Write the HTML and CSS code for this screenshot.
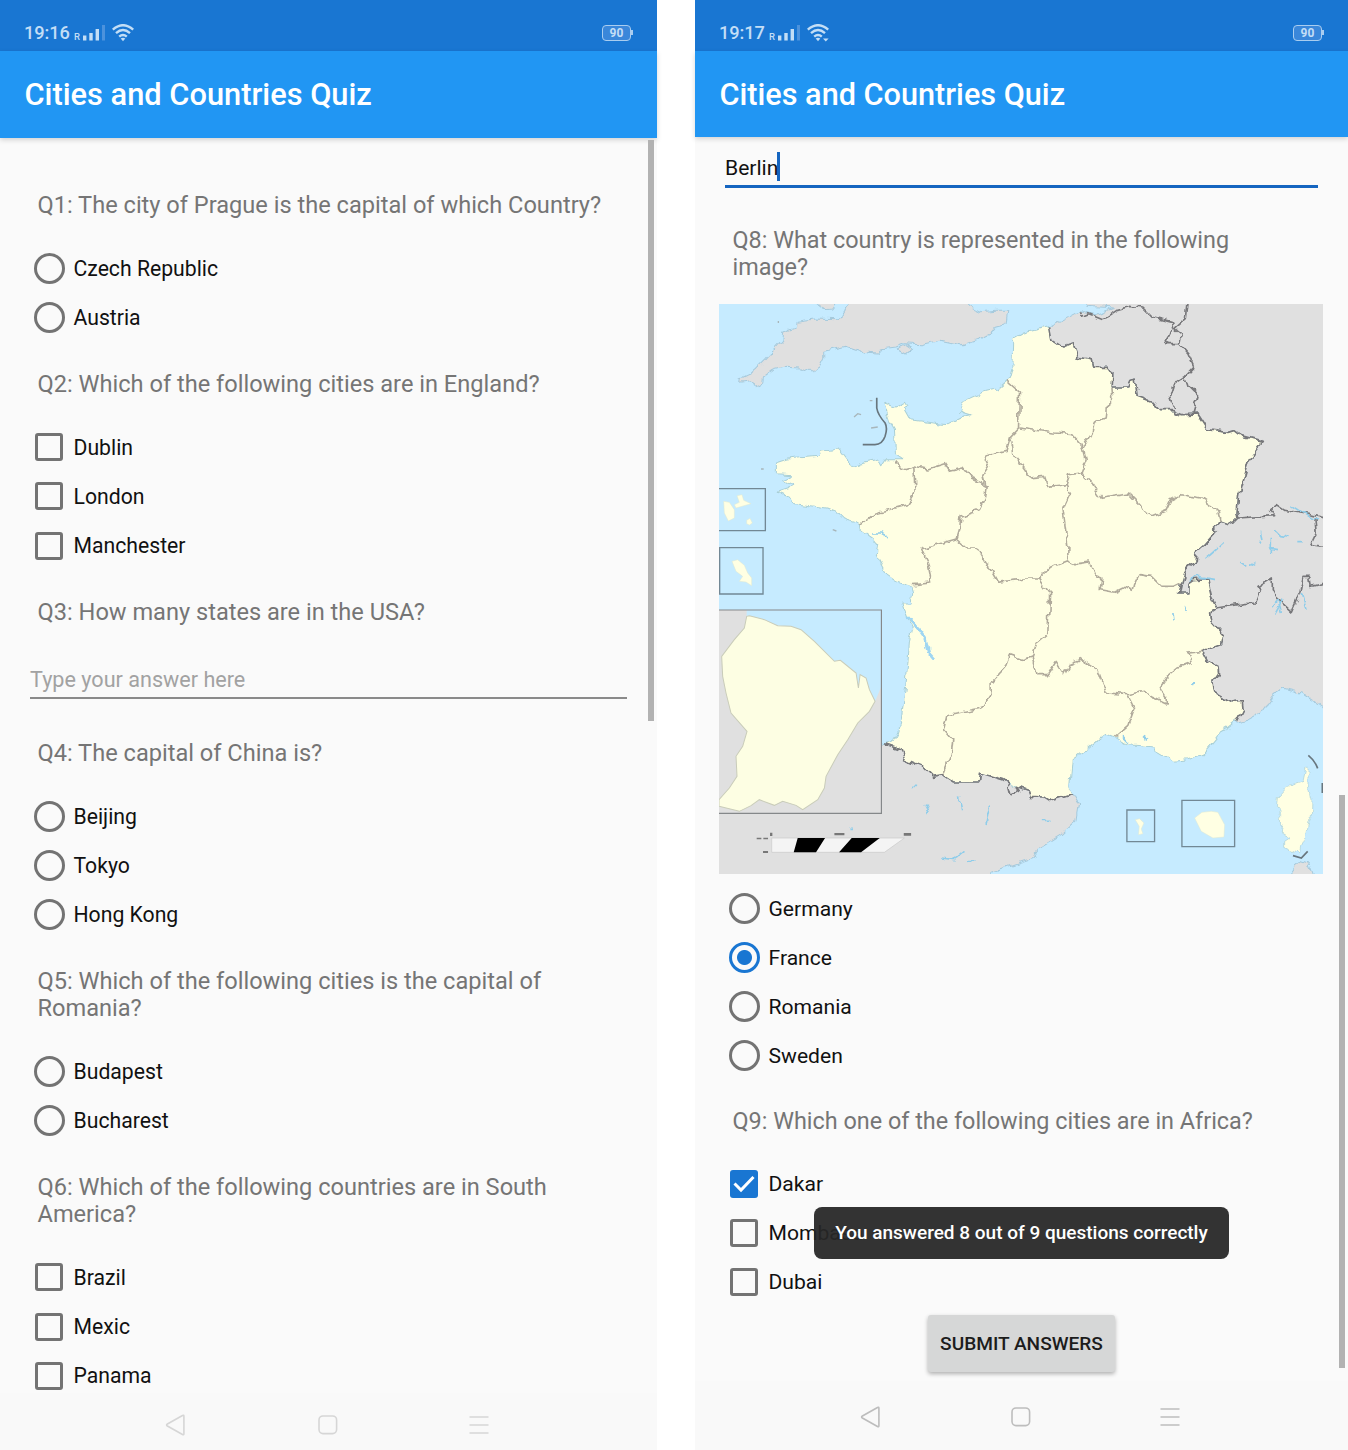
FILE: index.html
```html
<!DOCTYPE html>
<html lang="en">
<head>
<meta charset="utf-8">
<title>Cities and Countries Quiz</title>
<link rel="stylesheet" href="styles.css">
</head>
<body>
<svg class="defs" width="0" height="0" aria-hidden="true">
  <symbol id="signal" viewBox="0 0 24 16">
    <rect x="0" y="10.5" width="3.4" height="5" fill="#c3def6"/>
    <rect x="6.3" y="8" width="3.4" height="7.5" fill="#c3def6"/>
    <rect x="12.6" y="4" width="3.4" height="11.5" fill="#c3def6"/>
    <rect x="19" y="0" width="3" height="15.5" fill="#4c92dc"/>
  </symbol>
  <symbol id="wifi" viewBox="0 0 22 18">
    <g fill="none" stroke="#c3def6" stroke-width="2.4">
      <path d="M.8 5.6Q11-3.2 21.2 5.6"/>
      <path d="M4 9.2Q11 3 18 9.2"/>
      <path d="M7.2 12.6Q11 9.3 14.8 12.6"/>
    </g>
    <path d="M11 17.2L8.7 14.6Q11 13 13.3 14.6Z" fill="#c3def6"/>
  </symbol>
  <symbol id="back" viewBox="0 0 22 22">
    <path d="M18.9 2.2V19.8Q18.9 21.3 17.5 20.5L2.4 12Q.8 11 2.4 10L17.5 1.5Q18.9.7 18.9 2.2Z"/>
  </symbol>
  <symbol id="home" viewBox="0 0 22 22">
    <rect x="2" y="2" width="17.6" height="17.6" rx="4"/>
  </symbol>
  <symbol id="menu" viewBox="0 0 22 22">
    <path d="M1.5 3H20.5M1.5 11H20.5M1.5 19H20.5"/>
  </symbol>
</svg>
<main class="screens">
  <section class="phone phone-start">
    <header class="status">
      <span class="clock">19:16</span><span class="roaming">R</span>
      <svg class="signal"><use href="#signal"/></svg>
      <svg class="wifi"><use href="#wifi"/></svg>
      <span class="battery">90</span>
    </header>
    <h1 class="appbar">Cities and Countries Quiz</h1>
    <div class="content">
      <p class="question">Q1: The city of Prague is the capital of which Country?</p>
      <div class="option"><i class="radio"></i>Czech Republic</div>
      <div class="option"><i class="radio"></i>Austria</div>
      <p class="question">Q2: Which of the following cities are in England?</p>
      <div class="option"><i class="check"></i>Dublin</div>
      <div class="option"><i class="check"></i>London</div>
      <div class="option"><i class="check"></i>Manchester</div>
      <p class="question">Q3: How many states are in the USA?</p>
      <div class="field"><span>Type your answer here</span></div>
      <p class="question">Q4: The capital of China is?</p>
      <div class="option"><i class="radio"></i>Beijing</div>
      <div class="option"><i class="radio"></i>Tokyo</div>
      <div class="option"><i class="radio"></i>Hong Kong</div>
      <p class="question">Q5: Which of the following cities is the capital of<br>Romania?</p>
      <div class="option"><i class="radio"></i>Budapest</div>
      <div class="option"><i class="radio"></i>Bucharest</div>
      <p class="question">Q6: Which of the following countries are in South<br>America?</p>
      <div class="option"><i class="check"></i>Brazil</div>
      <div class="option"><i class="check"></i>Mexic</div>
      <div class="option"><i class="check"></i>Panama</div>
    </div>
    <div class="scrollbar"></div>
    <nav class="navbar">
      <svg><use href="#back"/></svg><svg><use href="#home"/></svg><svg><use href="#menu"/></svg>
    </nav>
  </section>

  <section class="phone phone-end">
    <header class="status">
      <span class="clock">19:17</span><span class="roaming">R</span>
      <svg class="signal"><use href="#signal"/></svg>
      <svg class="wifi"><use href="#wifi"/><path d="M16 14.4h5.6l-2.8 3.2z" fill="#c3def6"/></svg>
      <span class="battery">90</span>
    </header>
    <h1 class="appbar">Cities and Countries Quiz</h1>
    <div class="content">
      <div class="field field-active"><span>Berlin</span><i class="caret"></i></div>
      <p class="question">Q8: What country is represented in the following<br>image?</p>
      <svg class="map" viewBox="14 13 1811 1710" preserveAspectRatio="none">
        <defs>
          <filter id="coast" x="0" y="0" width="1840" height="1740" filterUnits="userSpaceOnUse" color-interpolation-filters="sRGB">
            <feTurbulence type="fractalNoise" baseFrequency="0.035" numOctaves="2" seed="4"/>
            <feDisplacementMap in="SourceGraphic" scale="24" xChannelSelector="R" yChannelSelector="G"/>
          </filter>
        </defs>
        <rect x="0" y="0" width="1840" height="1740" fill="#c6ebff"/>
        <g filter="url(#coast)" stroke-linejoin="round">
          <!-- neighbouring countries -->
          <g fill="#e0e0e0" stroke="#a5c9dc" stroke-width="3">
            <path d="M410 0L380 45 375 60 300 58 245 65 243 85 208 97 205 125 155 180 120 215 78 235 76 248 105 243 132 261 148 250 150 232 180 210 210 203 260 205 298 222 315 205 328 180 328 155 350 150 395 140 430 152 445 165 455 158 490 160 500 148 545 142 570 132 620 135 680 122 745 135 800 115 830 100 845 80 875 72 880 32 850 32 800 36 765 20 750 0Z"/>
            <path d="M300 8L330 30 355 28 370 8ZM548 148L575 135 595 148 575 163Z"/>
            <path d="M1005 80L1095 33 1140 45 1200 25 1120 20 1110 0H1850V1235L1825 1223 1760 1180 1705 1165 1675 1190 1640 1240 1600 1262 1568 1270 1400 1200 1300 700 1000 200Z"/>
            <path d="M490 1330L515 1335 800 1380 1080 1488 1092 1510 1083 1565 1040 1605 975 1645 955 1675 900 1693 830 1718 820 1760H0V1530H490Z"/>
            <path d="M1722 1730L1740 1700 1760 1683 1780 1690 1795 1730Z"/>
          </g>
          <path fill="#ffffe3" stroke="#a9cfd6" stroke-width="3" d="M1005 80L1012 120 1045 142 1075 130 1090 172 1130 180 1135 203 1180 203 1192 220 1190 262 1240 262 1250 240 1262 235 1268 290 1310 305 1335 333 1375 333 1400 345 1450 343 1480 390 1540 398 1560 392 1580 408 1643 425 1600 485 1585 540 1572 585 1567 640 1570 655 1550 675 1520 665 1497 685 1505 695 1470 735 1447 755 1445 780 1415 805 1400 855 1395 880 1420 880 1420 850 1435 840 1480 838 1485 868 1490 890 1508 925 1485 940 1490 965 1525 1005 1518 1035 1465 1055 1480 1085 1510 1100 1512 1120 1495 1145 1500 1180 1550 1210 1583 1205 1585 1225 1565 1265 1540 1285 1515 1300 1500 1320 1475 1350 1460 1365 1420 1380 1375 1385 1325 1355 1322 1342 1240 1335 1200 1310 1175 1300 1120 1345 1070 1380 1063 1460 1075 1485 1010 1505 990 1492 950 1490 945 1475 905 1460 880 1450 865 1440 798 1420 795 1447 720 1447 685 1425 655 1430 630 1405 570 1380 560 1350 515 1335 540 1325 560 1260 575 1150 585 1030 595 985 580 955 565 910 590 910 595 880 590 860 545 845 520 828 485 765 490 735 475 715 440 690 442 672 385 655 365 635 340 625 240 612 225 590 190 575 235 560 205 540 240 525 183 522 183 490 220 478 310 470 320 455 375 448 415 500 435 490 495 478 505 495 515 480 565 480 543 465 540 385 525 360 508 308 545 322 570 308 578 320 570 325 590 360 695 375 740 352 770 345 735 335 745 305 800 280 850 268 888 235 895 210 898 115 925 100Z"/>
          <path fill="#ffffe3" stroke="#a9cfd6" stroke-width="2" d="M1775 1400L1783 1400 1783 1450 1792 1500 1790 1550 1780 1570 1772 1610 1758 1640 1755 1660 1710 1640 1710 1625 1725 1615 1700 1600 1705 1570 1690 1555 1700 1540 1688 1525 1692 1490 1720 1460 1765 1445Z"/>
          <!-- regional borders -->
          <g fill="none" stroke="#b0aa9b" stroke-width="4.8">
            <path d="M543 485L565 508 598 498 640 508 690 492 705 515 745 505 770 535 800 548 815 555 810 600 795 630 740 650 735 685 725 718 620 748 640 790 652 850 595 855"/>
            <path d="M598 498L602 580 580 615 485 640 440 675"/>
            <path d="M725 718L755 745 790 745 825 805 850 848 925 838 975 838 1010 800 1060 780"/>
            <path d="M810 550L805 530 825 500 810 470 875 455 888 410 912 385 915 280 875 245M888 410L900 470 930 510 945 535 990 530 1000 560 1055 555 1065 525 1100 520 1115 480 1105 440 1075 405 1020 400 915 385"/>
            <path d="M1105 440L1130 400 1135 370 1175 355 1180 315 1195 300 1192 262M1100 520L1130 550 1160 593 1240 580 1275 615 1285 635 1315 648 1355 632 1370 600 1400 585 1460 595 1510 630 1520 665"/>
            <path d="M1055 555L1068 580 1045 630 1060 740 1060 780 1090 795 1125 790 1140 825 1165 835 1160 870 1200 878 1225 865 1255 875 1260 855 1275 825 1310 830 1340 860 1380 860 1400 850"/>
            <path d="M975 838L1005 880 1005 895 1000 1000 965 1030 950 1072 925 1080 885 1065 870 1105 830 1150 830 1180 800 1225 700 1245 690 1290 715 1320 710 1365 685 1425"/>
            <path d="M950 1072L965 1125 1000 1125 1025 1085 1050 1125 1065 1095 1100 1080 1150 1110 1175 1180 1240 1185 1260 1225 1240 1280 1205 1310"/>
            <path d="M1240 1185L1290 1175 1310 1190 1355 1210 1355 1195 1335 1165 1360 1130 1390 1105 1430 1090 1420 1060 1465 1055"/>
          </g>
          <!-- national borders -->
          <g fill="none" stroke="#77777a" stroke-width="5">
            <path d="M1005 80L1012 120 1045 142 1075 130 1090 172 1130 180 1135 203 1180 203 1192 220 1190 262 1240 262 1250 240 1262 235 1268 290 1310 305 1335 333 1375 333 1400 345 1450 343 1480 390 1540 398 1560 392 1580 408 1643 425 1600 485 1585 540 1572 585 1567 640 1570 655 1550 675 1520 665 1497 685 1505 695 1470 735 1447 755 1445 780 1415 805 1400 855 1395 880 1420 880 1420 850 1435 840 1480 838 1485 868 1490 890 1508 925 1485 940 1490 965 1525 1005 1518 1035 1465 1055 1480 1085 1510 1100 1512 1120 1495 1145 1500 1180 1550 1210 1583 1205 1585 1225 1565 1265"/>
            <path d="M1075 1485L1010 1505 990 1492 950 1490 945 1475 905 1460 915 1475 890 1488 880 1450 865 1440 798 1420 795 1447 720 1447 685 1425 655 1430 630 1405 570 1380 560 1350 515 1335"/>
            <path d="M1095 35L1100 50 1120 42 1165 60 1210 30 1245 20 1285 25 1310 50 1370 65 1375 90 1355 120 1360 132 1395 132 1400 105 1380 90 1415 60 1420 10M1395 132L1420 160 1438 200 1410 230 1420 260 1450 290 1435 343M1410 230L1380 250 1368 290 1380 325"/>
            <path d="M1570 655L1680 648 1665 630 1685 615 1710 632 1785 645 1830 655M1800 655L1805 700 1788 735 1830 740"/>
            <path d="M1508 925L1590 912 1625 910 1640 870 1630 860 1670 835 1670 870 1680 890 1730 935 1755 880 1765 830 1785 830 1790 860 1830 850"/>
          </g>
          <!-- lakes and estuaries -->
          <g fill="none" stroke="#8fcdea" stroke-width="5">
            <path d="M1470 780L1510 745M1515 742L1530 728M1640 695L1645 715M1635 720L1640 725M1680 690L1695 705 1725 710M1665 745L1690 750M1670 720V760M1745 723H1765M1580 790L1595 800M1605 798L1622 788M1730 618L1780 650 1810 662M1425 840L1450 830 1500 840M1670 920L1690 900 1700 940M1760 880L1775 930M1705 900L1680 945M1375 940L1378 965M1412 925L1418 937M1430 1155L1445 1147M470 700L500 700 520 712M1225 1310L1245 1330M1285 1310L1300 1322"/>
            <path d="M590 1460H608M632 1515L645 1540M735 1490L745 1530M825 1520L815 1570M680 1675L720 1680 750 1655M760 1683H780M985 1562H1005M405 1583H418"/>
          </g>
          <path d="M580 950L610 985 635 1020 645 1060 658 1075" fill="none" stroke="#9fd6f2" stroke-width="10"/>
        </g>
        <g fill="none" stroke="#68767e" stroke-width="5">
          <path d="M487 294V325Q490 345 512 370 520 385 512 410 503 436 480 435H445"/>
          <path d="M1781 1367Q1800 1382 1809 1406M1735 1668L1760 1675 1779 1655M1823 1450V1480"/>
        </g>
        <!-- overseas territories -->
        <g fill="#c6ebff" stroke="#728895" stroke-width="4">
          <path d="M10 567H153V693H10M16 744H146V883H16ZM1237 1531H1320V1626H1237ZM1402 1502H1560V1641H1402Z"/>
        </g>
        <g fill="#ffffe3" stroke="#dfe9d2" stroke-width="1.5">
          <path d="M28 605L45 608 60 630 60 655 42 664 30 640ZM68 588L83 585 88 602 110 612 65 625 60 615 75 608ZM97 662L107 656 114 670 105 676 97 672Z"/>
          <path d="M53 785L70 780 90 797 100 820 112 835 112 858 95 847 75 845 85 830 65 815Z"/>
          <path d="M1262 1560L1275 1557 1288 1570 1280 1588 1285 1602 1272 1605 1274 1580Z"/>
          <path d="M1440 1555L1462 1538 1490 1535 1510 1538 1530 1575 1528 1612 1495 1615 1460 1595Z"/>
        </g>
        <g>
          <path fill="#e0e0e0" d="M14 931H501V1541H14Z"/>
          <path fill="#c6ebff" d="M97 931H501V1160L482 1205 400 1180 97 960Z"/>
          <path fill="#fdfee3" stroke="#c9ccb9" stroke-width="3" d="M105 948L150 960 190 978 230 980 260 990 300 1025 360 1085 378 1082 425 1120 432 1165 437 1125 455 1135 465 1170 482 1205 465 1235 430 1270 400 1320 370 1365 335 1430 330 1465 310 1500 265 1530 245 1517 205 1505 180 1517 135 1500 110 1518 75 1535 14 1520V1500L45 1465 68 1430 65 1370 85 1340 98 1295 50 1240 35 1180 25 1130 22 1070 60 1020 90 985 97 950Z"/>
          <path fill="none" stroke="#85888a" stroke-width="3.5" d="M10 931H501V1541H10"/>
        </g>
        <!-- scale bar -->
        <path fill="#f4f4f4" stroke="#c8c8c8" stroke-width="2" d="M172 1615H570L510 1658H172Z"/>
        <path d="M250 1615H332L305 1658H238ZM412 1615H496L440 1658H374Z"/>
        <g fill="#777"><path d="M167 1599h7v10h-7zM360 1600h30v7h-30zM568 1600h22v8h-22zM127 1614h14v5h-14zM147 1614h14v5h-14zM146 1654h15v6h-15z"/></g>
        <g fill="none" stroke="#a8b6bb" stroke-width="4"><path d="M419 352L430 342 440 345M470 385L490 382M355 690L366 694M192 64V70M140 508H148M466 303H474"/></g>
      </svg>
      <div class="option"><i class="radio"></i>Germany</div>
      <div class="option"><i class="radio radio-on"></i>France</div>
      <div class="option"><i class="radio"></i>Romania</div>
      <div class="option"><i class="radio"></i>Sweden</div>
      <p class="question">Q9: Which one of the following cities are in Africa?</p>
      <div class="option"><i class="check check-on"><svg viewBox="0 0 28 28"><path d="M4.5 13.5L11 20 23.5 7"/></svg></i>Dakar</div>
      <div class="option"><i class="check"></i>Mombasa</div>
      <div class="option"><i class="check"></i>Dubai</div>
      <button class="submit">SUBMIT ANSWERS</button>
    </div>
    <div class="scrollbar"></div>
    <div class="toast">You answered 8 out of 9 questions correctly</div>
    <nav class="navbar">
      <svg><use href="#back"/></svg><svg><use href="#home"/></svg><svg><use href="#menu"/></svg>
    </nav>
  </section>
</main>
</body>
</html>
```
FILE: styles.css
```css
* { box-sizing: border-box; }
body { margin: 0; background: #fff; font-family: Roboto, "Liberation Sans", sans-serif; }
.defs { position: absolute; }
.screens { display: flex; gap: 38px; width: 1348px; height: 1450px; overflow: hidden; }

.phone { position: relative; display: flex; flex-direction: column; height: 1450px; background: #fafafa; }
.phone-start { width: 657px; --row: 49.25px; --appbar: 86.5px; --nav: 57px; --nav-icon: #d6d6d6; --q-size: 23.6px; --o-size: 21.2px; --title: 30.8px; }
.phone-end { width: 653px; --row: 48.95px; --appbar: 85.5px; --nav: 69px; --nav-icon: #bdbdbd; --q-size: 23.4px; --o-size: 21.1px; --title: 30.65px; }

.status { display: flex; align-items: center; flex: none; height: 51px; padding: 14px 26px 0 24px; background: #1976d2; color: #c3def6; }
.clock { width: 50px; font-size: 18.2px; font-weight: 500; letter-spacing: -.1px; }
.roaming { width: 9px; padding-top: 7px; font-size: 9.5px; font-weight: 500; }
.signal { width: 24px; height: 16px; }
.wifi { width: 22px; height: 18px; margin-left: 5px; overflow: visible; }
.battery { position: relative; width: 29px; height: 16px; margin-left: auto; border: 1.5px solid #a9cdf0; border-radius: 4px; font-size: 12px; font-weight: 700; line-height: 14px; text-align: center; background: #3a87da; }
.battery::after { content: ""; position: absolute; right: -3px; top: 4px; width: 2px; height: 5px; background: #a9cdf0; }

.appbar { flex: none; height: var(--appbar); margin: 0; padding-left: 24.5px; background: #2196f3; color: #fff; font-size: var(--title); font-weight: 500; line-height: 88px; box-shadow: 0 2px 5px rgba(0,0,0,.16); white-space: nowrap; }

.content { flex: 1; min-height: 0; padding-top: 26.2px; }
.question { margin: 0; padding: 28.6px 0 24.1px 37.5px; color: #757575; font-size: var(--q-size); line-height: 27.4px; white-space: nowrap; }
.option { display: flex; align-items: center; height: var(--row); padding-left: 33.5px; color: #111; font-size: var(--o-size); }
.radio, .check { display: block; flex: none; border: 3px solid #737373; }
.radio { width: 31px; height: 31px; margin-right: 9px; border-radius: 50%; }
.radio-on { border-color: #1976d2; background: radial-gradient(circle, #1976d2 7px, transparent 8px); }
.check { width: 28px; height: 28px; margin: 0 10.5px 0 1.5px; border-radius: 3px; }
.check-on { border: 0; background: #1976d2; }
.check-on svg { display: block; fill: none; stroke: #fff; stroke-width: 3; }
.field { display: flex; align-items: center; height: 49px; margin: 0 30px 12.1px; padding-top: 12px; border-bottom: 2px solid #8a8a8a; color: #a2a2a2; font-size: 21.6px; }

.phone-end .content { padding-top: 0; }
.field-active { height: 51px; margin-bottom: 11.2px; padding-top: 13px; border-bottom: 3px solid #1565c0; color: #111; font-size: 21.1px; }
.caret { width: 3px; height: 29px; margin: -2px 0 0 -1px; background: #1565c0; }
.phone-end .question { line-height: 27px; }
.map { display: block; width: 604px; height: 570px; margin: -1px 0 9.5px 24.4px; }
.submit { display: block; width: 187px; height: 57px; margin: 9px auto 0; padding: 0; border: 0; border-radius: 3px; background: #d6d7d7; box-shadow: 0 2px 4px rgba(0,0,0,.3); color: #1c1c1c; font: 500 19.1px Roboto, sans-serif; white-space: nowrap; }

.scrollbar { position: absolute; width: 6px; background: #b2b2b2; }
.phone-start .scrollbar { left: 648px; top: 140px; height: 581px; }
.phone-end .scrollbar { left: 644px; top: 795px; height: 573px; }
.toast { position: absolute; left: 119px; top: 1206.5px; width: 415px; height: 52px; border-radius: 8px; background: rgba(38,38,38,.94); color: #fff; font-size: 19px; font-weight: 500; line-height: 52.5px; text-align: center; white-space: nowrap; }

.navbar { display: flex; flex: none; height: var(--nav); padding: 0 167px 0 165px; justify-content: space-between; align-items: center; background: #f9f9f9; }
.phone-start .navbar { padding-top: 7px; }
.phone-end .navbar { padding: 2px 167px 0 165px; }
.navbar svg { width: 22px; height: 22px; fill: none; stroke: var(--nav-icon); stroke-width: 1.6; }
```
